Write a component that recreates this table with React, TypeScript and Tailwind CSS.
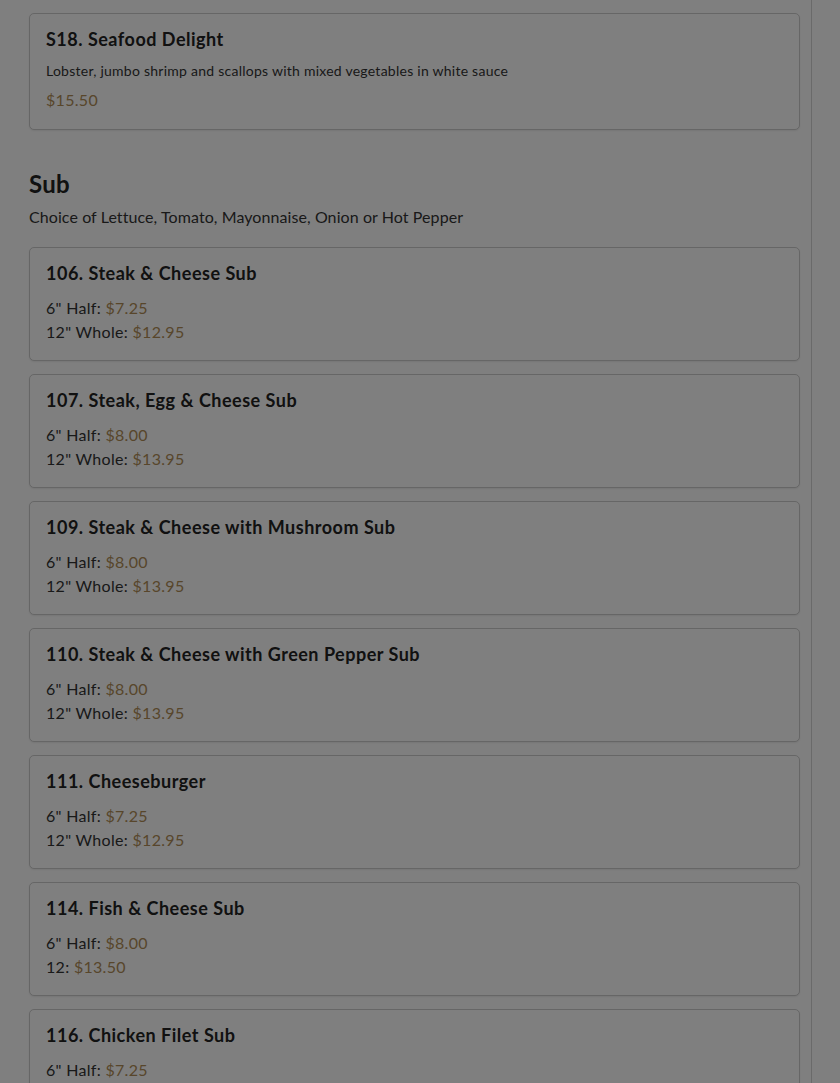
import React from "react";

type Item = { name: string; lines?: [string, string][]; desc?: string; price?: string };

const subs: Item[] = [
  { name: "106. Steak & Cheese Sub", lines: [["6\" Half:", "$7.25"], ["12\" Whole:", "$12.95"]] },
  { name: "107. Steak, Egg & Cheese Sub", lines: [["6\" Half:", "$8.00"], ["12\" Whole:", "$13.95"]] },
  { name: "109. Steak & Cheese with Mushroom Sub", lines: [["6\" Half:", "$8.00"], ["12\" Whole:", "$13.95"]] },
  { name: "110. Steak & Cheese with Green Pepper Sub", lines: [["6\" Half:", "$8.00"], ["12\" Whole:", "$13.95"]] },
  { name: "111. Cheeseburger", lines: [["6\" Half:", "$7.25"], ["12\" Whole:", "$12.95"]] },
  { name: "114. Fish & Cheese Sub", lines: [["6\" Half:", "$8.00"], ["12:", "$13.50"]] },
  { name: "116. Chicken Filet Sub", lines: [["6\" Half:", "$7.25"], ["12\" Whole:", "$12.95"]] },
];

function Card({ item }: { item: Item }) {
  const hasLines = !!item.lines;
  return (
    <div
      className={
        hasLines
          ? "rounded-[5px] border border-[#cccccc] bg-white px-4 pt-[13px] pb-[16px] shadow-[0_1px_2px_rgba(0,0,0,0.08)]"
          : "rounded-[5px] border border-[#cccccc] bg-white px-4 pt-[13px] pb-[18px] shadow-[0_1px_2px_rgba(0,0,0,0.08)]"
      }
    >
      <div className="text-[18px] font-bold leading-[24px] tracking-[0.5px] text-[#222]">{item.name}</div>
      {item.desc && (
        <div className="mt-[10px] text-[14px] leading-[20px] tracking-[0.25px] text-[#333]">{item.desc}</div>
      )}
      {item.price && (
        <div className="mt-[8px] text-[16px] leading-[22px] tracking-[0.3px] text-[#b08d57]">{item.price}</div>
      )}
      {item.lines && (
        <div className="mt-[11px]">
          {item.lines.map(([l, p], i) => (
            <div key={i} className="text-[16px] leading-[24px] tracking-[0.3px] text-[#333]">
              {l} <span className="text-[#b08d57]">{p}</span>
            </div>
          ))}
        </div>
      )}
    </div>
  );
}

export default function App() {
  return (
    <div className="relative min-h-[1083px] bg-white" style={{ fontFamily: "Lato, 'Noto Sans', sans-serif" }}>
      <div className="flex h-[1083px] overflow-hidden">
        <div className="w-[812px] shrink-0 border-r border-[#d4d4d4] pl-[29px] pr-[11px]">
          <div className="pt-[13px]">
            <Card
              item={{
                name: "S18. Seafood Delight",
                desc: "Lobster, jumbo shrimp and scallops with mixed vegetables in white sauce",
                price: "$15.50",
              }}
            />
          </div>
          <h2 className="mt-[38px] text-[24px] font-bold leading-[32px] tracking-[0.3px] text-[#222]">Sub</h2>
          <p className="mt-[6px] text-[16px] leading-[22px] tracking-[0.08px] text-[#333]">
            Choice of Lettuce, Tomato, Mayonnaise, Onion or Hot Pepper
          </p>
          <div className="mt-[19px] flex flex-col gap-[13px]">
            {subs.map((s) => (
              <Card key={s.name} item={s} />
            ))}
          </div>
        </div>
        <div className="flex-1" />
      </div>
      <div className="fixed inset-0 bg-black/50" />
    </div>
  );
}
